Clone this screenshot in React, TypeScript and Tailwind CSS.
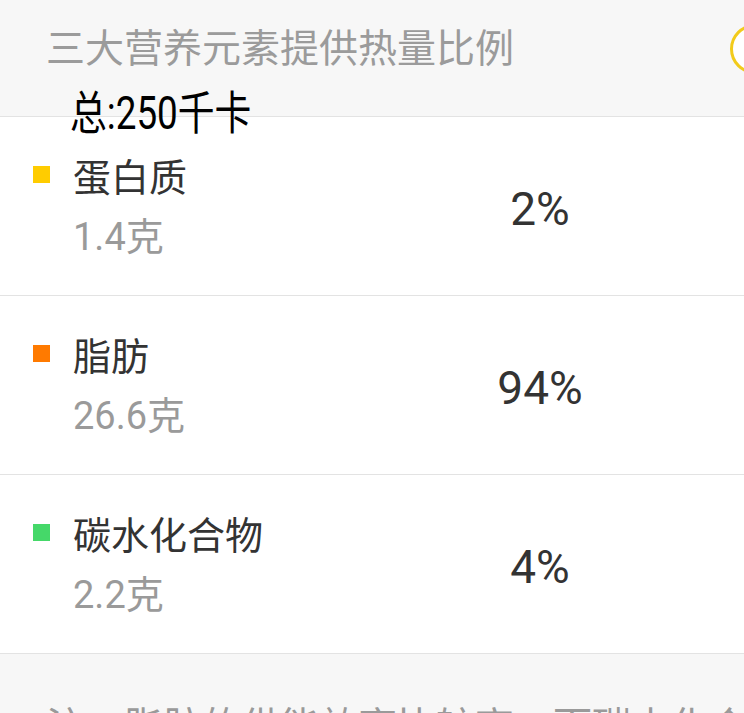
const font = { fontFamily: "Roboto, 'Noto Sans CJK SC', sans-serif" };

const rows = [
  { name: '蛋白质', amount: '1.4克', pct: '2%', color: 'bg-[#ffcc00]' },
  { name: '脂肪', amount: '26.6克', pct: '94%', color: 'bg-[#ff7a00]' },
  { name: '碳水化合物', amount: '2.2克', pct: '4%', color: 'bg-[#45d869]' },
];

export default function App() {
  return (
    <div className="w-[744px] h-[713px] overflow-hidden bg-[#f7f7f7]" style={font}>
      {/* Header */}
      <div className="h-[117px] border-b border-[#e3e3e3] pt-[24px] pl-[46px]">
        <div className="flex items-center justify-between">
          <span className="text-[39px] leading-[48px] text-[#9b9b9b]">三大营养元素提供热量比例</span>
          <div className="w-[50px] h-[50px] -mr-[36px] rounded-full border-[3px] border-[#f2cb1b] bg-white" />
        </div>
        <div className="relative z-10 mt-[15px] ml-[24px] w-fit origin-left scale-x-[0.8] text-[46px] leading-[48px] font-normal text-black">
          总:250千卡
        </div>
      </div>

      {/* Rows */}
      {rows.map((r) => (
        <div key={r.name} className="h-[179px] bg-white border-b border-[#e3e3e3] flex items-center">
          <div className="w-[440px] flex items-start pl-[33px] pt-[4px]">
            <div className={`w-[17px] h-[17px] mt-[17px] ${r.color}`} />
            <div className="ml-[23px] flex flex-col">
              <span className="text-[38px] leading-[59px] text-[#333333]">{r.name}</span>
              <span className="text-[38px] leading-[59px] text-[#9a9a9a]">{r.amount}</span>
            </div>
          </div>
          <div className="w-[200px] text-center pt-[5px] text-[46px] leading-[56px] text-[#333333]">{r.pct}</div>
        </div>
      ))}

      {/* Note */}
      <div className="pt-[49px] pl-[46px] whitespace-nowrap text-[39px] leading-[48px] text-[#9a9a9a]">
        注：脂肪的供能效率比较高，而碳水化合物
      </div>
    </div>
  );
}
